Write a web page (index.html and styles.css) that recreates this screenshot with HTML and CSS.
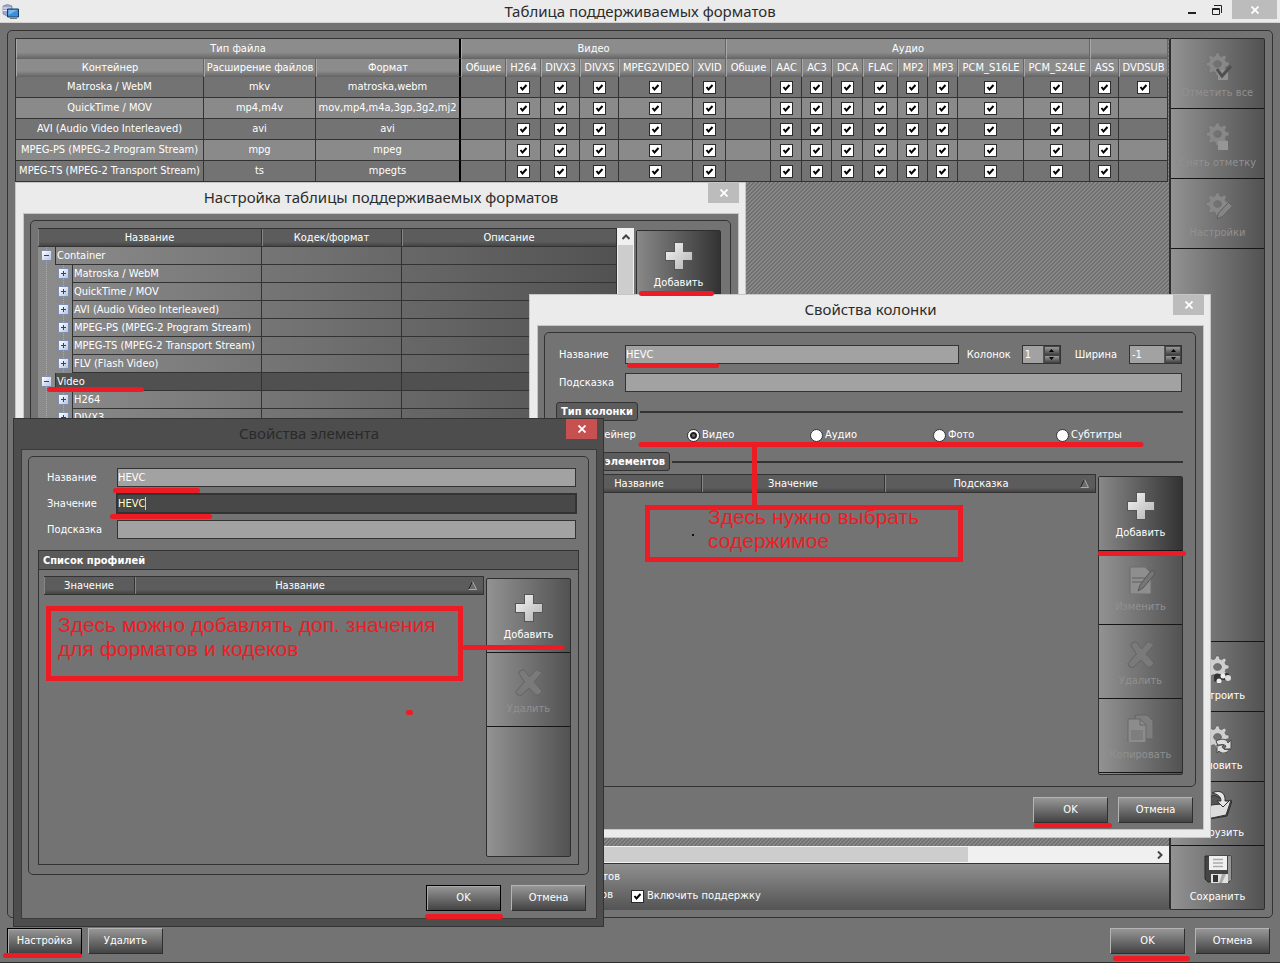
FILE: index.html
```html
<!DOCTYPE html>
<html lang="ru">
<head>
<meta charset="utf-8">
<title>Таблица поддерживаемых форматов</title>
<link rel="stylesheet" href="styles.css">
</head>
<body>
<svg class="defs" aria-hidden="true">
  <defs>
    <linearGradient id="metal" x1="0" y1="0" x2="1" y2="1"><stop offset="0" stop-color="#f4f4f4"/><stop offset="1" stop-color="#b4b4b4"/></linearGradient>
    <symbol id="i-plus" viewBox="0 0 28 28"><path d="M9 0h10v9h9v10h-9v9H9v-9H0V9h9z" fill="#555"/><path d="M10 1h8v9h9v8h-9v9h-8v-9H1v-8h9z" fill="url(#metal)"/></symbol>
    <symbol id="i-cross" viewBox="0 0 28 28"><path d="M5 3l4-1.500 5.500 7.500 6.500-7.500 6 3-8 9.500 8 9-2 3-4 1.500-7-7.500-8 7.500-4-1-1-3 8.500-9.500-6-9z" fill="#7a7a7a" stroke="#646464"/></symbol>
    <symbol id="i-gearbody" viewBox="0 0 28 28"><path fill-rule="evenodd" d="M12 1l3 0 .7 3 2 .8 2.500-1.800 2.200 2-1.500 2.700 1 2 3 .6 0 3.200-3 .8-.8 2 1.600 2.500-2.200 2.200-2.600-1.500-2 .9-.7 3-3.200 0-.8-3-2-.8-2.600 1.600-2.200-2.200 1.600-2.600-.9-2-3-.6 0-3.200 3-.7.800-2-1.600-2.600 2.200-2.200 2.600 1.600 2-.9zM13.500 8.500a4 3.500 0 1 0 .1 0z"/></symbol>
    <symbol id="i-gearcheck" viewBox="0 0 28 28"><use href="#i-gearbody" fill="#888" stroke="#6b6b6b" stroke-width=".5"/><path d="M14 18h10v11H14z" fill="#929292"/><path d="M13 17l5 7 9-10" fill="none" stroke="#505050" stroke-width="3"/></symbol>
    <symbol id="i-gearbox" viewBox="0 0 28 28"><use href="#i-gearbody" fill="#888" stroke="#6b6b6b" stroke-width=".5"/><path d="M14 19h10v9H14z" fill="#969696"/></symbol>
    <symbol id="i-gearpen" viewBox="0 0 28 28"><use href="#i-gearbody" fill="#888" stroke="#6b6b6b" stroke-width=".5"/><path d="M13 27l1.500-6 10-10.500 4 3.500-10 10.500z" fill="#858585" stroke="#606060"/></symbol>
    <symbol id="i-geartune" viewBox="0 0 28 28"><use href="#i-gearbody" fill="#cfcfcf" stroke="#555" stroke-width=".6"/><path d="M10 20c4-4 7 1 10-1 4-3 7 1 5 5-3 3-6 0-8 1l-3 3-4-2z" fill="#333"/><circle cx="15" cy="26" r="2.500" fill="#eee"/><circle cx="19" cy="21" r="2.500" fill="#eee"/><circle cx="24" cy="23" r="3" fill="#ddd"/></symbol>
    <symbol id="i-gearsync" viewBox="0 0 28 28"><use href="#i-gearbody" fill="#cfcfcf" stroke="#555" stroke-width=".6"/><path d="M12 16c6-3 11-2 12 2l3-3v9h-7l2-3c-2-2-5-2-8 0zM13 20h7l-2 2c2 3 5 3 8 2-3 5-9 5-11 2l-2 2z" fill="#ddd" stroke="#4a4a4a"/></symbol>
    <symbol id="i-folder" viewBox="0 0 28 28"><path d="M1 24l1-16 8-4 6 3 6 3 6 0-5 15-18 3z" fill="#555" stroke="#2d2d2d"/><path d="M3 28l4-14 10-1 10-4-5 15z" fill="#ddd" stroke="#333"/><path d="M8 2c8-4 14 0 13 8h4l-6 6-6-6h4c0-5-4-7-9-8z" fill="#e4e4e4" stroke="#333"/></symbol>
    <symbol id="i-disk" viewBox="0 0 28 28"><path d="M1 1h26v23l-2 3H4l-3-3z" fill="#444" stroke="#2b2b2b"/><path d="M24 1h3v24l-3 2z" fill="#999"/><path d="M5 1h18v14H5z" fill="#f0f0f0"/><path d="M9 4.500h10M9 8h10M9 11.500h10" stroke="#aaa" stroke-width="1.500"/><path d="M7 19h17v9H7z" fill="#e2e2e2"/><path d="M9 20h5v7H9z" fill="#333"/><path d="M18 19h4l-4 9h-3z" fill="#aaa"/></symbol>
    <symbol id="i-edit" viewBox="0 0 28 28"><path d="M3 1h15l6 6v21H3z" fill="#8e8e8e" stroke="#6c6c6c"/><path d="M5 12h17M5 16h17" stroke="#767676" stroke-width="2"/><path d="M11 25l2-6 10-13c3-3 6 0 4 3l-11 13z" fill="#767676" stroke="#585858"/></symbol>
    <symbol id="i-copy" viewBox="0 0 28 28"><path d="M8 1h12l6 6v18H8z" fill="#7e7e7e" stroke="#656565"/><path d="M1 5h12l6 6v18H1z" fill="#8c8c8c" stroke="#686868"/><path d="M13 5v6h6" fill="none" stroke="#656565"/><path d="M4 16h12v10H4z" fill="#7e7e7e"/></symbol>
    <symbol id="i-x" viewBox="0 0 8 8"><path d="M.5.500l7 7M7.500.500l-7 7" stroke="#fff" stroke-width="1.800"/></symbol>
    <symbol id="i-sort" viewBox="0 0 9 9"><path d="M4.500.500L.5 8.500h8z" fill="#6c6c6c"/><path d="M4.500.500L.5 8.500" stroke="#222"/><path d="M4.500.500l4 8h-8" fill="none" stroke="#aaa"/></symbol>
    <symbol id="i-spin" viewBox="0 0 5 3"><path d="M0 3L2.500 0 5 3z" fill="#000"/></symbol>
  </defs>
</svg>

<div class="app">
  <header class="titlebar">
    <svg class="app-icon" viewBox="0 0 17 15" aria-hidden="true"><path d="M1 2q4-3 9 0v10q-5 1-9-2z" fill="#9aa8cc" stroke="#7581a8" stroke-width=".7"/><path d="M1 4h8M1 6.500h6" stroke="#e6ebf5"/><path d="M5.500 5h11v8h-11z" fill="#3e8fd8" stroke="#173e66"/><path d="M6.500 6h9l-9 5z" fill="#75b9ee"/><path d="M8 14.500h7" stroke="#777"/></svg>
    <h1 class="caption">Таблица поддерживаемых форматов</h1>
    <div class="win-controls">
      <button class="win-btn" aria-label="Свернуть"><svg viewBox="0 0 10 10"><path d="M1 8h8" stroke="#222" stroke-width="2"/></svg></button>
      <button class="win-btn" aria-label="Восстановить"><svg viewBox="0 0 10 10"><path d="M.5 3.500h7v6h-7zM.5 4.500h7" fill="none" stroke="#222"/><path d="M2 .5h7.500V8" fill="none" stroke="#222"/></svg></button>
      <button class="close close-wide" aria-label="Закрыть"><svg><use href="#i-x"/></svg></button>
    </div>
  </header>

  <main class="workspace">
    <div class="frame split">
      <div class="left">
        <div class="sheet">
          <table class="formats">
            <colgroup id="format-cols"></colgroup>
            <thead id="format-head"></thead>
            <tbody id="format-rows"></tbody>
          </table>
        </div>
        <div class="hscroll"><span class="hthumb"></span><svg viewBox="0 0 6 8"><path d="M1 .5L4.500 4 1 7.500" fill="none" stroke="#444" stroke-width="2"/></svg></div>
        <div class="options">
          <span class="option-note">форматов</span>
          <span class="option-note option-second">кодеков</span>
          <label class="tick"><input type="checkbox" class="check" checked>Включить поддержку</label>
        </div>
      </div>
      <nav class="toolbar main-toolbar">
        <button class="tool off"><svg><use href="#i-gearcheck"/></svg>Отметить все</button>
        <button class="tool off"><svg><use href="#i-gearbox"/></svg>Снять отметку</button>
        <button class="tool off"><svg><use href="#i-gearpen"/></svg>Настройки</button>
        <span class="tool-space"></span>
        <button class="tool"><svg><use href="#i-geartune"/></svg>Настроить</button>
        <button class="tool"><svg><use href="#i-gearsync"/></svg>Обновить</button>
        <button class="tool short"><svg><use href="#i-folder"/></svg>Загрузить</button>
        <button class="tool short"><svg><use href="#i-disk"/></svg>Сохранить</button>
      </nav>
    </div>
  </main>

  <footer class="footer">
    <button class="btn default">Настройка</button>
    <button class="btn">Удалить</button>
    <span class="grow"></span>
    <button class="btn">OK</button>
    <button class="btn">Отмена</button>
  </footer>
</div>

<section class="dialog dialog-table" aria-label="Настройка таблицы поддерживаемых форматов">
  <header class="dialog-title"><h2 class="caption">Настройка таблицы поддерживаемых форматов</h2><button class="close" aria-label="Закрыть"><svg><use href="#i-x"/></svg></button></header>
  <div class="dialog-body">
    <div class="frame tree-frame">
      <div class="tree-pane">
        <table class="tree">
          <colgroup><col class="c-name"><col class="c-codec"><col></colgroup>
          <thead><tr><th>Название</th><th>Кодек/формат</th><th>Описание</th></tr></thead>
          <tbody id="tree-rows"></tbody>
        </table>
      </div>
      <div class="vscroll"><svg viewBox="0 0 8 6"><path d="M.5 5L4 1.500 7.500 5" fill="none" stroke="#444" stroke-width="2"/></svg><span class="vthumb"></span></div>
      <nav class="toolbar"><button class="tool dark"><svg><use href="#i-plus"/></svg>Добавить</button><span class="tool-space"></span></nav>
    </div>
  </div>
</section>

<section class="dialog dialog-column" aria-label="Свойства колонки">
  <header class="dialog-title"><h2 class="caption">Свойства колонки</h2><button class="close" aria-label="Закрыть"><svg><use href="#i-x"/></svg></button></header>
  <div class="dialog-body">
    <div class="frame column-frame">
      <div class="form-row">
        <label class="lbl" for="col-name">Название</label><input class="field" id="col-name" value="HEVC">
        <label class="lbl-spin" for="col-count">Колонок</label>
        <span class="spin spin-s"><input type="number" id="col-count" value="1"><span class="arrows"><button tabindex="-1" aria-label="Больше"><svg><use href="#i-spin"/></svg></button><button tabindex="-1" aria-label="Меньше"><svg class="down"><use href="#i-spin"/></svg></button></span></span>
        <label class="lbl-spin lbl-width" for="col-width">Ширина</label>
        <span class="spin"><input type="number" id="col-width" value="-1"><span class="arrows"><button tabindex="-1" aria-label="Больше"><svg><use href="#i-spin"/></svg></button><button tabindex="-1" aria-label="Меньше"><svg class="down"><use href="#i-spin"/></svg></button></span></span>
      </div>
      <div class="form-row"><label class="lbl" for="col-hint">Подсказка</label><input class="field" id="col-hint"></div>
      <div class="legend"><h3>Тип колонки</h3></div>
      <div class="radios">
        <label><input type="radio" name="kind">Контейнер</label>
        <label><input type="radio" name="kind" checked>Видео</label>
        <label><input type="radio" name="kind">Аудио</label>
        <label><input type="radio" name="kind">Фото</label>
        <label><input type="radio" name="kind">Субтитры</label>
      </div>
      <div class="legend"><h3>Список элементов</h3></div>
      <div class="list-area">
        <table class="list column-list"><thead><tr><th class="w-name">Название</th><th class="w-value">Значение</th><th class="sorted"><span>Подсказка</span><svg><use href="#i-sort"/></svg></th></tr></thead></table>
        <nav class="toolbar column-toolbar">
          <button class="tool dark"><svg><use href="#i-plus"/></svg>Добавить</button>
          <button class="tool off"><svg><use href="#i-edit"/></svg>Изменить</button>
          <button class="tool off"><svg><use href="#i-cross"/></svg>Удалить</button>
          <button class="tool off"><svg><use href="#i-copy"/></svg>Копировать</button>
        </nav>
      </div>
    </div>
    <div class="actions"><button class="btn">OK</button><button class="btn">Отмена</button></div>
  </div>
</section>

<section class="dialog dialog-item" aria-label="Свойства элемента">
  <header class="dialog-title"><h2 class="caption">Свойства элемента</h2><button class="close" aria-label="Закрыть"><svg><use href="#i-x"/></svg></button></header>
  <div class="dialog-body">
    <div class="frame item-frame">
      <div class="form-row"><label class="lbl" for="it-name">Название</label><input class="field" id="it-name" value="HEVC"></div>
      <div class="form-row"><label class="lbl" for="it-value">Значение</label><span class="field active"><input id="it-value" value="HEVC"><i class="caret"></i></span></div>
      <div class="form-row"><label class="lbl" for="it-hint">Подсказка</label><input class="field" id="it-hint"></div>
      <div class="group">
        <h3>Список профилей</h3>
        <div class="list-area">
          <table class="list"><thead><tr><th class="w-value">Значение</th><th class="sorted"><span>Название</span><svg><use href="#i-sort"/></svg></th></tr></thead></table>
          <nav class="toolbar">
            <button class="tool"><svg><use href="#i-plus"/></svg>Добавить</button>
            <button class="tool off"><svg><use href="#i-cross"/></svg>Удалить</button>
            <span class="tool-space"></span>
          </nav>
        </div>
      </div>
    </div>
    <div class="actions"><button class="btn default">OK</button><button class="btn">Отмена</button></div>
  </div>
</section>

<svg class="marks" width="1280" height="963" viewBox="0 0 1280 963" aria-hidden="true">
  <g stroke="#ed1c24" stroke-width="5" stroke-linecap="round">
    <path d="M641.500 293.500h70M49.500 389.500h92M629.500 365.500h87M641 444.500h500M1100.500 553.500h83M1036.500 825.500h73M115.500 490.500h82M112.500 516.500h97M465 647.500h97M427.500 916.500h73M5.500 955.500h74M1115.500 958.500h72M408.500 712.500h2M754.500 447v58"/>
  </g>
  <path d="M647.500 507.500h313v52h-313zM48.500 608.500h412v70h-412z" fill="none" stroke="#ed1c24" stroke-width="5"/>
  <rect x="692" y="534" width="2" height="2" fill="#111"/>
</svg>
<p class="note note-content">Здесь нужно выбрать<br>содержимое</p>
<p class="note note-values">Здесь можно добавлять доп. значения<br>для форматов и кодеков</p>
<script src="script.js"></script>
</body>
</html>
```
FILE: styles.css
```css
* { box-sizing: border-box; }
body {
  margin: 0;
  background: #737373;
  color: #fff;
  font: 11px/14px "DejaVu Sans Condensed", "Noto Sans", sans-serif;
}
button, input { font: inherit; color: inherit; margin: 0; padding: 0; border: 0; border-radius: 0; }
button { background: none; }
h1, h2, h3, p { margin: 0; }
table { border-collapse: separate; border-spacing: 0; table-layout: fixed; }
th, td { padding: 0; font-weight: normal; text-align: center; white-space: nowrap; overflow: hidden; }
.defs { position: absolute; width: 0; height: 0; }

.app { min-height: 100vh; display: flex; flex-direction: column; border-bottom: 1px solid #2c2c2c; }
.titlebar { display: grid; grid-template-columns: 1fr auto 1fr; height: 23px; background: #ebebeb; border-bottom: 1px solid #d2d2d2; }
.app-icon { width: 17px; height: 15px; margin: 4px 0 0 2px; }
.caption { font: 15px/22px "Noto Sans", sans-serif; color: #2b2b2b; white-space: nowrap; text-align: center; }
.win-controls { display: flex; justify-content: flex-end; align-items: flex-start; gap: 5px; padding-right: 3px; }
.win-btn { width: 20px; height: 19px; display: grid; place-items: center; }
.win-btn svg { width: 10px; height: 10px; }
.close { width: 31px; height: 20px; background: #bcbcbc; display: grid; place-items: center; }
.close svg { width: 8px; height: 8px; }
.close-wide { width: 45px; height: 19px; }

.workspace { flex: 1; display: flex; padding: 7px 7px 0; }
.frame { border: 1px solid #333; border-radius: 5px; }
.split { flex: 1; display: flex; padding: 7px; min-width: 0; }
.left { flex: 1; min-width: 0; display: flex; flex-direction: column; }
.sheet {
  flex: 1; overflow: hidden; border: 1px solid #333; border-width: 1px 0 0 1px;
  background: linear-gradient(135deg, #707070 25%, #898989 25% 50%, #707070 50% 75%, #898989 75%) 0 0 / 4px 4px;
}
.formats th { height: 20px; line-height: 18px; border-left: 1px solid #a8a8a8; border-right: 1px solid #666; border-bottom: 1px solid #666; background: linear-gradient(#8c8c8c 70%, #6a6a6a); }
.formats tr + tr th { height: 18px; line-height: 17px; }
.formats td { height: 21px; background: #737373; border-right: 1px solid #333; border-bottom: 1px solid #333; }
.formats tr:nth-child(even) td { background: #8a8a8a; }
.formats .edge { border-right: 2px solid #000; }
.check {
  appearance: none; display: block; width: 13px; height: 13px; border: 1px solid #2b2b2b;
  background: #fff;
}
.formats .check { margin: 0 auto; }
.check:checked { background: #fff url("data:image/svg+xml,%3Csvg xmlns='http://www.w3.org/2000/svg' viewBox='0 0 11 11'%3E%3Cpath d='M2.500 5l2 2.500L8.500 3' fill='none' stroke='%23000' stroke-width='2'/%3E%3C/svg%3E") center / 11px 11px; }
.hscroll { height: 18px; background: #f0f0f0; border-bottom: 1px solid #333; display: flex; align-items: center; padding-right: 6px; }
.hthumb { width: 83%; height: 15px; margin-right: auto; background: #cdcdcd; }
.hscroll svg { width: 6px; height: 8px; }
.options { height: 46px; display: grid; grid-template-columns: 605px 1fr; grid-template-rows: 18px 20px; padding-top: 4px; background: linear-gradient(#8f8f8f, #545454); line-height: 18px; }
.option-note { text-align: right; grid-column: 1; }
.option-second { padding-right: 7px; grid-row: 2; }
.tick { grid-row: 2; padding-left: 11px; display: flex; align-items: center; gap: 3px; }

.toolbar { display: flex; flex-direction: column; flex: none; width: 85px; border: 1px solid #2e2e2e; border-radius: 2px; background: linear-gradient(90deg, #929292, #525252); }
.main-toolbar { width: 96px; border-left-width: 2px; }
.tool { height: 74px; flex: none; display: flex; flex-direction: column; align-items: center; gap: 6px; padding-top: 15px; border-bottom: 1px solid #161616; white-space: nowrap; }
.tool svg { width: 28px; height: 28px; flex: none; overflow: visible; }
.tool.off { color: #909090; }
.tool.dark { background: linear-gradient(90deg, #888, #333); }
.main-toolbar .tool { height: 70px; padding-top: 13px; gap: 6px; }
.main-toolbar .short { height: 64px; padding-top: 9px; gap: 7px; }
.main-toolbar .tool:last-child { height: 63px; border-bottom: 0; }
.tool-space { flex: 1; border-bottom: 1px solid #161616; }
.tool-space:last-child { border-bottom: 0; }

.footer { display: flex; padding: 10px 10px 8px 7px; gap: 6px; }
.grow { flex: 1; }
.btn { width: 75px; height: 26px; border: 1px solid; border-color: #b4b4b4 #2f2f2f #2f2f2f #b4b4b4; background: linear-gradient(#979797, #434343); }
.btn.default { border-color: #000; box-shadow: inset 1px 1px #aaa; }
.footer .btn:last-child { margin-left: 4px; }

.dialog { position: absolute; display: flex; flex-direction: column; padding: 0 6px 7px 7px; background: #ebebeb; border: 1px solid #c6c6c6; }
.dialog-table { left: 15px; top: 182px; width: 731px; height: 640px; }
.dialog-column { left: 529px; top: 294px; width: 682px; height: 544px; }
.dialog-item { left: 13px; top: 418px; width: 591px; height: 509px; background: #4d4d4d; border-color: #333; }
.dialog-title { height: 30px; flex: none; display: grid; grid-template-columns: 31px 1fr 31px; }
.dialog-title .caption { grid-column: 2; line-height: 29px; }
.dialog-body { flex: 1; min-height: 0; display: flex; flex-direction: column; padding: 6px 7px 6px 6px; border: 1px solid #c6c6c6; background: #737373; }
.dialog-item .dialog-body { border-color: #3a3a3a; }
.dialog-item .close { background: #c75050; }
.dialog-item .caption { color: #2a2a2a; }
.actions { display: flex; justify-content: flex-end; gap: 10px; padding: 10px 3px 1px; }
.dialog-column .actions { padding-bottom: 3px; }

.tree-frame { flex: 1; display: flex; padding: 7px 9px 7px 7px; min-height: 0; }
.tree-pane { flex: 1; overflow: hidden; background: linear-gradient(90deg, #8c8c8c, #525252); }
.tree { width: 100%; }
.c-name { width: 224px; }
.c-codec { width: 140px; }
.tree th, .list th { height: 19px; line-height: 17px; background: linear-gradient(#5c5c5c 75%, #444); border-top: 1px solid #333; border-right: 1px solid #333; border-bottom: 1px solid #333; box-shadow: inset 1px 0 #858585; }
.tree td { height: 18px; border-right: 1px solid #333; border-bottom: 1px solid #333; }
.tree td:first-child { border-bottom: 0; }
.tree .node { display: flex; height: 18px; }
.gutter { width: 17px; flex: none; display: grid; place-items: center; padding-bottom: 1px; background: linear-gradient(#aaa 50%, transparent 50%) 8px 0 / 1px 2px repeat-y; }
.leaf-label { flex: 1; text-align: left; padding-left: 1px; line-height: 17px; border-left: 1px solid #333; border-bottom: 1px solid #333; }
.picked td:not(:first-child), .picked .leaf-label { background: #505050; }
.expander { width: 11px; height: 11px; border: 1px solid #7f8fae; background: linear-gradient(90deg, #2b4373, #2b4373) center / 5px 1px no-repeat, linear-gradient(135deg, #fff, #b5c4e4); }
.expander.plus { background: linear-gradient(#2b4373, #2b4373) center / 5px 1px no-repeat, linear-gradient(#2b4373, #2b4373) center / 1px 5px no-repeat, linear-gradient(135deg, #fff, #b5c4e4); }
.vscroll { width: 17px; margin-right: 2px; background: #f0f0f0; display: flex; flex-direction: column; align-items: center; }
.vscroll svg { width: 8px; height: 6px; margin: 6px 0 5px; }
.vthumb { flex: 1; width: 15px; background: #cdcdcd; }
.tree-frame .toolbar { margin-top: 2px; }
.tree-frame .tool { height: 70px; padding-top: 11px; }

.form-row { display: flex; align-items: center; }
.lbl { width: 66px; flex: none; }
.field { flex: 1; min-width: 0; height: 19px; padding: 0; border: 1px solid #333; background: #a2a2a2; }
.field.active { display: flex; align-items: center; height: 21px; margin: 0 -1px; border-width: 2px; background: #484848; color: #ffffcb; }
.active input { width: 27px; background: none; outline: 0; }
.caret { width: 1px; height: 13px; background: #ccc; }
.lbl-spin { padding: 0 11px 0 8px; }
.spin { display: flex; width: 53px; height: 19px; border: 1px solid #333; background: #a2a2a2; }
.spin-s { width: 39px; }
.spin input { flex: 1; min-width: 0; padding-left: 2px; background: none; appearance: textfield; }
.spin input::-webkit-inner-spin-button { display: none; }
.arrows { display: flex; flex-direction: column; width: 17px; border-left: 1px solid #555; }
.arrows button { flex: 1; display: grid; place-items: center; background: linear-gradient(#999, #4a4a4a); border: 1px solid #444; }
.arrows svg { width: 5px; height: 3px; }
.down { transform: rotate(180deg); }

.column-frame { flex: 1; display: flex; flex-direction: column; padding: 12px 12px 11px 11px; }
.column-frame .form-row { padding: 0 1px 9px 3px; }
.lbl-width { padding: 0 12px 0 14px; }
.legend { display: flex; align-items: center; gap: 2px; height: 19px; margin-top: 1px; }
.legend::after { content: ""; flex: 1; height: 2px; background: #333; }
.legend h3, .group h3 { font: bold 11px/17px "DejaVu Sans Condensed", "Noto Sans", sans-serif; }
.legend h3 { padding: 0 4px; border: 1px solid #333; border-radius: 3px; background: #5c5c5c; }
.radios { display: grid; grid-template-columns: repeat(5, 123px); padding: 7px 0 9px 8px; }
.radios label { display: flex; align-items: center; gap: 2px; line-height: 14px; }
.radios input { appearance: none; width: 13px; height: 13px; border: 1px solid #333; border-radius: 50%; background: #fff; }
.radios input:checked { background: radial-gradient(circle at 50% 50%, #666 1px, #222 2px, #222 3px, #fff 4px); }
.list-area { flex: 1; display: flex; gap: 2px; min-height: 0; }
.list { flex: 1; align-self: flex-start; }
.sorted { position: relative; }
.sorted span { margin-right: 18px; }
.sorted svg { position: absolute; right: 6px; top: 4px; width: 9px; height: 9px; }
.column-frame .list-area { padding: 3px 0 0 21px; }
.column-list .w-name { width: 125px; }
.column-list .w-value { width: 183px; }
.column-toolbar { margin-top: 2px; padding-bottom: 1px; align-self: flex-start; }

.item-frame { flex: 1; display: flex; flex-direction: column; padding: 11px 9px 9px; }
.item-frame .form-row { padding: 0 3px 6px 9px; }
.item-frame .lbl { width: 70px; }
.group { flex: 1; display: flex; flex-direction: column; margin-top: 5px; border: 1px solid #333; }
.group h3 { padding: 1px 4px 0; border-bottom: 1px solid #333; background: #5a5a5a; }
.group .list-area { padding: 6px 7px 7px 5px; }
.group .w-value { width: 91px; }
.group .toolbar { margin-top: 2px; }

.marks { position: absolute; left: 0; top: 0; pointer-events: none; }
.note { position: absolute; color: #ed1c24; font: 21px/24px "Liberation Sans", sans-serif; white-space: nowrap; }
.note-content { left: 708px; top: 505px; }
.note-values { left: 58px; top: 613px; }
```
FILE: script.js
```js
const columns = [
  ["Контейнер", 188], ["Расширение файлов", 112], ["Формат", 145],
  ["Общие", 45], ["H264", 35], ["DIVX3", 39], ["DIVX5", 39], ["MPEG2VIDEO", 74], ["XVID", 33],
  ["Общие", 45], ["AAC", 31], ["AC3", 30], ["DCA", 31], ["FLAC", 35], ["MP2", 30], ["MP3", 30],
  ["PCM_S16LE", 66], ["PCM_S24LE", 66], ["ASS", 29], ["DVDSUB", 49]
];
const groups = [["Тип файла", 3], ["Видео", 6], ["Аудио", 9], ["", 2]];
const formats = [
  ["Matroska / WebM", "mkv", "matroska,webm"],
  ["QuickTime / MOV", "mp4,m4v", "mov,mp4,m4a,3gp,3g2,mj2"],
  ["AVI (Audio Video Interleaved)", "avi", "avi"],
  ["MPEG-PS (MPEG-2 Program Stream)", "mpg", "mpeg"],
  ["MPEG-TS (MPEG-2 Transport Stream)", "ts", "mpegts"]
];
const edge = i => (i === 2 ? ' class="edge"' : "");
document.getElementById("format-cols").innerHTML =
  columns.map(c => `<col style="width:${c[1]}px">`).join("");
document.querySelector(".formats").style.width = columns.reduce((s, c) => s + c[1], 0) + "px";
document.getElementById("format-head").innerHTML =
  "<tr>" + groups.map((g, i) => `<th colspan="${g[1]}"${edge(i + 2)}>${g[0]}</th>`).join("") + "</tr>" +
  "<tr>" + columns.map((c, i) => `<th${edge(i)}>${c[0]}</th>`).join("") + "</tr>";
document.getElementById("format-rows").innerHTML = formats.map((f, r) =>
  "<tr>" + columns.map((c, i) => {
    if (i < 3) return `<td${edge(i)}>${f[i]}</td>`;
    if (c[0] === "Общие" || (c[0] === "DVDSUB" && r > 0)) return "<td></td>";
    return `<td><input type="checkbox" class="check" checked aria-label="${f[0]}: ${c[0]}"></td>`;
  }).join("") + "</tr>").join("");

const tree = [
  [0, "Container"], [1, "Matroska / WebM"], [1, "QuickTime / MOV"], [1, "AVI (Audio Video Interleaved)"],
  [1, "MPEG-PS (MPEG-2 Program Stream)"], [1, "MPEG-TS (MPEG-2 Transport Stream)"], [1, "FLV (Flash Video)"],
  [0, "Video"], [1, "H264"], [1, "DIVX3"]
];
document.getElementById("tree-rows").innerHTML = tree.map(([level, name]) =>
  `<tr${name === "Video" ? ' class="picked"' : ""}><td><div class="node">` +
  (level ? '<span class="gutter"></span>' : "") +
  `<span class="gutter"><span class="expander${level ? " plus" : ""}"></span></span>` +
  `<span class="leaf-label">${name}</span></div></td><td></td><td></td></tr>`).join("");
```
